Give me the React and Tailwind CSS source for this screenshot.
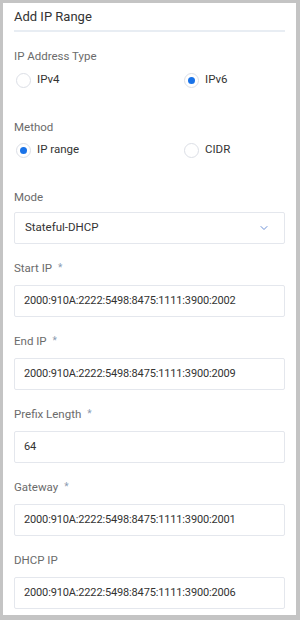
import { ChevronDown } from 'lucide-react';

const font = { fontFamily: 'Roboto, "Liberation Sans", sans-serif' };

const Radio = ({ label, checked }) => (
  <label className="flex items-center gap-[6px] h-5 text-[11.5px] text-[#333]">
    <span className="w-[15px] h-[15px] rounded-full border border-[#dcdfe6] bg-white flex items-center justify-center">
      {checked && <span className="w-[7px] h-[7px] rounded-full bg-[#1a73e8]" />}
    </span>
    {label}
  </label>
);

const Label = ({ children, required }) => (
  <div className="h-4 flex items-center text-[11.5px] leading-4 text-[#6b6b6b]">
    {children}
    {required && <span className="ml-[6px] text-[10px] text-[#8a9bb0]">*</span>}
  </div>
);

const Field = ({ label, required, value }) => (
  <div className="mt-4">
    <Label required={required}>{label}</Label>
    <div className="mt-[9px] h-8 border border-[#e4e7ed] rounded-[2px] flex items-center px-[9px] text-[11px] tracking-[-0.15px] text-[#333]">
      {value}
    </div>
  </div>
);

const App = () => {
  return (
    <div className="w-[300px] h-[620px] bg-[#c4c4c4] pt-[3px] pl-[3px] pr-[4px] pb-[5px]" style={font}>
      <div className="bg-white h-full px-[11px]">
        {/* Header */}
        <div className="pt-[4px] pb-[3px] border-b-2 border-[#e8edf3]">
          <h1 className="h-5 leading-5 text-[13px] text-[#333]">Add IP Range</h1>
        </div>

        <div className="mt-4">
          <Label>IP Address Type</Label>
          <div className="mt-[6px] grid grid-cols-[168px_1fr] pl-[2px]">
            <Radio label="IPv4" />
            <Radio label="IPv6" checked />
          </div>
        </div>

        <div className="mt-[29px]">
          <Label>Method</Label>
          <div className="mt-[5px] grid grid-cols-[168px_1fr] pl-[2px]">
            <Radio label="IP range" checked />
            <Radio label="CIDR" />
          </div>
        </div>

        <div className="mt-[29px]">
          <Label>Mode</Label>
          <div className="mt-[7px] h-8 border border-[#e4e7ed] rounded-[2px] flex items-center justify-between pl-[10px] pr-[14px] text-[11.5px] text-[#333]">
            Stateful-DHCP
            <ChevronDown size={12} strokeWidth={2} className="text-[#6b8fd6]" />
          </div>
        </div>

        <Field label="Start IP" required value="2000:910A:2222:5498:8475:1111:3900:2002" />
        <Field label="End IP" required value="2000:910A:2222:5498:8475:1111:3900:2009" />
        <Field label="Prefix Length" required value="64" />
        <Field label="Gateway" required value="2000:910A:2222:5498:8475:1111:3900:2001" />
        <Field label="DHCP IP" value="2000:910A:2222:5498:8475:1111:3900:2006" />
      </div>
    </div>
  );
};

export default App;
